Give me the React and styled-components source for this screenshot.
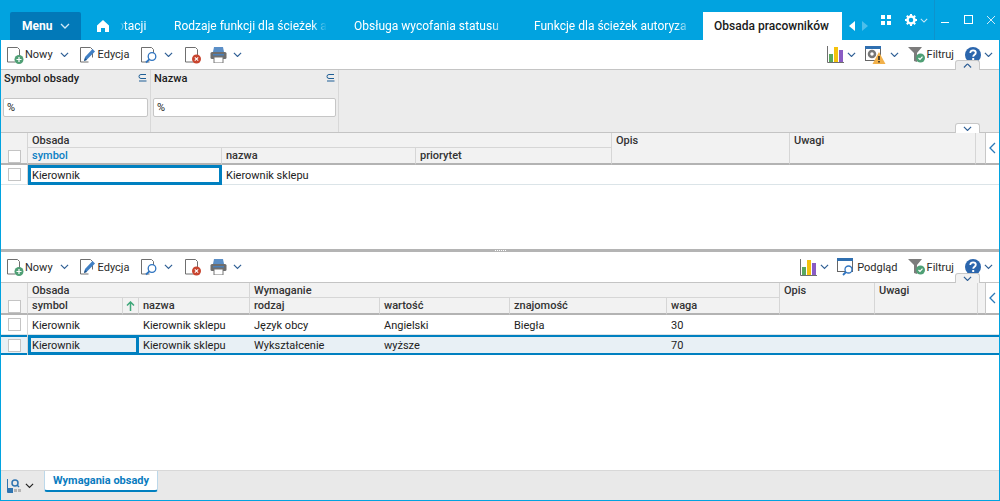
import styled, { createGlobalStyle } from 'styled-components';

const GlobalStyle = createGlobalStyle`
  html, body { margin: 0; padding: 0; height: 100%; overflow: hidden; }
  body { font-family: Roboto, "Liberation Sans", sans-serif; font-size: 11px; color: #222; }
  #root { height: 100%; }
`;

const Chevron = ({ color = '#2f5f95', size = 9 }) => (
  <svg width={size} height={size * 0.6} viewBox="0 0 10 6" fill="none">
    <path d="M1 1l4 4 4-4" stroke={color} strokeWidth="1.3" />
  </svg>
);

const Sheet = ({ children }) => (
  <svg width="17" height="18" viewBox="0 0 17 18" fill="none">
    <path d="M.5 1.500h10l2 2v8M.5 1.500v14.500h8" stroke="#6f6f6f" strokeWidth="1" />
    {children}
  </svg>
);

const NewIcon = () => (
  <Sheet>
    <circle cx="12" cy="13.500" r="4.500" fill="#4f9f75" />
    <path d="M12 11v5M9.500 13.500h5" stroke="#fff" strokeWidth="1.200" />
  </Sheet>
);

const EditIcon = () => (
  <Sheet>
    <path d="M4 15l1-4 7.500-8 2.500 2.500-8 8z" fill="#3f7fc4" />
    <path d="M4 15l1-3 2 2z" fill="#1f4f80" />
  </Sheet>
);

const SearchIcon = () => (
  <Sheet>
    <circle cx="11" cy="10.500" r="3.800" stroke="#2f74c0" strokeWidth="1.300" fill="#fff" />
    <path d="M8.300 13.300L5 16.500" stroke="#2f74c0" strokeWidth="1.800" />
  </Sheet>
);

const DeleteIcon = () => (
  <Sheet>
    <circle cx="11.500" cy="13" r="4.500" fill="#c8452f" />
    <path d="M9.800 11.300l3.400 3.400M13.200 11.300l-3.400 3.400" stroke="#fff" strokeWidth="1.100" />
  </Sheet>
);

const PrinterIcon = () => (
  <svg width="17" height="16" viewBox="0 0 17 16">
    <path d="M4 0h9l1 5H3z" fill="#5b8fc7" />
    <rect x="0.500" y="5" width="16" height="7" rx="1.500" fill="#6d6d6d" />
    <rect x="3" y="7" width="11" height="1.500" fill="#4a7fb8" />
    <rect x="4" y="10" width="9" height="6" fill="#fff" stroke="#777" strokeWidth="1" />
  </svg>
);

const ChartIcon = () => (
  <svg width="17" height="17" viewBox="0 0 17 17">
    <path d="M.5 0v16.500H17" fill="none" stroke="#6f6f6f" />
    <rect x="2" y="8" width="4" height="8" fill="#5aa85f" />
    <rect x="7" y="1" width="4" height="15" fill="#f4c20d" />
    <rect x="12" y="4" width="4" height="12" fill="#8a5cc4" />
  </svg>
);

const SettingsWarnIcon = () => (
  <svg width="21" height="18" viewBox="0 0 21 18">
    <rect x="0.500" y="0.500" width="15" height="14" fill="#fff" stroke="#666" />
    <rect x="0" y="0" width="16" height="3" fill="#2f6fb0" />
    <circle cx="7" cy="8" r="3" fill="none" stroke="#777" strokeWidth="2.500" />
    <path d="M14 6l6.500 12H7.500z" fill="#f2b14a" />
    <path d="M14 10v4M14 15v1.500" stroke="#222" strokeWidth="1.500" />
  </svg>
);

const PreviewIcon = () => (
  <svg width="19" height="18" viewBox="0 0 19 18" fill="none">
    <rect x="0.500" y="0.500" width="15" height="13" fill="#fff" stroke="#666" />
    <rect x="0" y="0" width="16" height="3" fill="#2f6fb0" />
    <circle cx="11.500" cy="11.500" r="3.500" stroke="#2f74c0" strokeWidth="1.300" fill="#fff" />
    <path d="M9 14l-3 3" stroke="#2f74c0" strokeWidth="1.800" />
  </svg>
);

const FunnelIcon = () => (
  <svg width="18" height="16" viewBox="0 0 18 16">
    <path d="M0 0h14L9 6v9l-3-1V6z" fill="#7c7c7c" />
    <circle cx="12.500" cy="11" r="4.500" fill="#4f9f75" />
    <path d="M10.500 11l1.500 1.500 2.500-2.800" fill="none" stroke="#fff" strokeWidth="1.200" />
  </svg>
);

const HelpIcon = () => (
  <svg width="16" height="16" viewBox="0 0 16 16">
    <circle cx="8" cy="8" r="8" fill="#2b66ad" />
    <path d="M5.300 6c0-1.700 1.200-2.700 2.800-2.700s2.700 1 2.700 2.400c0 2-2.600 2-2.600 4" fill="none" stroke="#fff" strokeWidth="1.800" />
    <rect x="7.200" y="11" width="2" height="2" fill="#fff" />
  </svg>
);

const HomeIcon = () => (
  <svg width="12" height="12" viewBox="0 0 12 12">
    <path d="M6 0l6 5.500V12H8V8H4v4H0V5.500z" fill="#fff" />
  </svg>
);

const GridIcon = () => (
  <svg width="11" height="10" viewBox="0 0 11 10">
    <path d="M0 0h4v4H0zM6 0h4v4H6zM0 6h4v4H0zM6 6h4v4H6z" fill="#fff" />
  </svg>
);

const GearIcon = () => (
  <svg width="12" height="12" viewBox="0 0 12 12">
    <circle cx="6" cy="6" r="3.500" fill="none" stroke="#fff" strokeWidth="2.500" />
    <path d="M6 0v2M6 10v2M0 6h2M10 6h2M1.800 1.800l1.400 1.400M8.800 8.800l1.400 1.400M1.800 10.200l1.400-1.400M8.800 3.200l1.400-1.400" stroke="#fff" strokeWidth="2" />
  </svg>
);

const Subset = () => (
  <svg width="9" height="8" viewBox="0 0 9 8" fill="none">
    <path d="M8 .5H3a2 2 0 000 4h5M1 7h7.500" stroke="#1f5f96" strokeWidth="1" />
  </svg>
);

const Back = () => (
  <svg width="7" height="12" viewBox="0 0 7 12" fill="none">
    <path d="M6 1L1 6l5 5" stroke="#2a78b8" strokeWidth="1.300" />
  </svg>
);

const Window = styled.div`
  height: 501px;
  box-sizing: border-box;
  display: flex;
  flex-direction: column;
  background: #01a3e0;
  padding: 0 1px 1px;
`;

const TitleBar = styled.div`
  height: 40px;
  flex: none;
  display: flex;
  align-items: flex-end;
  padding-left: 9px;
  color: #fff;
`;

const MenuButton = styled.div`
  width: 71px;
  height: 28px;
  box-sizing: border-box;
  padding-left: 12px;
  background: #0279b8;
  display: flex;
  align-items: center;
  gap: 8px;
  font-size: 12px;
  font-weight: 700;
  border-radius: 2px 2px 0 0;
`;

const HomeTab = styled.div`
  height: 28px;
  width: 36px;
  display: flex;
  align-items: center;
  padding-left: 16px;
  box-sizing: border-box;
`;

const ClippedTab = styled.div`
  width: ${(p) => p.$width}px;
  margin-right: ${(p) => p.$gap}px;
  height: 28px;
  line-height: 28px;
  font-size: 12px;
  white-space: nowrap;
  overflow: hidden;
  mask-image: ${(p) =>
    p.$fadeStart
      ? 'linear-gradient(to right, transparent 3px, #000 9px)'
      : 'linear-gradient(to right, #000 90%, transparent)'};
`;

const ActiveTab = styled.div`
  width: 139px;
  height: 28px;
  box-sizing: border-box;
  padding-right: 2px;
  line-height: 28px;
  background: #fff;
  color: #1a1a1a;
  font-size: 12px;
  font-weight: 500;
  text-align: center;
`;

const TabNav = styled.div`
  display: flex;
  align-items: center;
  gap: 7px;
  height: 28px;
  margin-left: 7px;
  width: 30px;
`;

const NavArrow = styled.span`
  width: 0;
  height: 0;
  border-top: 5px solid transparent;
  border-bottom: 5px solid transparent;
  border-${(p) => (p.$right ? 'left' : 'right')}: 6px solid ${(p) => (p.$dim ? '#4dbfeb' : '#fff')};
`;

const TitleActions = styled.div`
  align-self: stretch;
  flex: 1;
  position: relative;
`;

const AppIcon = styled.span`
  position: absolute;
  left: ${(p) => p.$x}px;
  top: ${(p) => p.$y}px;
  display: flex;
`;

const WinSeparator = styled.span`
  position: absolute;
  left: 55px;
  top: 0;
  width: 1px;
  height: 40px;
  background: #0e93cc;
`;

const Pane = styled.div`
  background: #fff;
  display: flex;
  flex-direction: column;
  height: ${(p) => p.$height}px;
  flex: ${(p) => (p.$grow ? 1 : 'none')};
  position: relative;
  min-height: 0;
`;

const Toolbar = styled.div`
  height: ${(p) => p.$height}px;
  flex: none;
  box-sizing: border-box;
  display: flex;
  align-items: center;
  justify-content: space-between;
  padding: 0 6px;
  background: #fff;
  border-bottom: 1px solid #c4c4c4;
  font-size: 11px;
`;

const ToolGroup = styled.div`
  display: flex;
  align-items: center;
`;

const ToolItem = styled.span`
  display: flex;
  align-items: center;
  gap: 1px;
  margin-left: ${(p) => p.$ml || 0}px;
  color: #2a2a2a;
`;

const ChevronSlot = styled.span`
  display: flex;
  margin-left: ${(p) => p.$ml || 0}px;
`;

const FilterArea = styled.div`
  height: 62px;
  flex: none;
  display: flex;
  background: #ececec;
  border-bottom: 1px solid #c4c4c4;
`;

const FilterColumn = styled.div`
  width: ${(p) => p.$width}px;
  box-sizing: border-box;
  padding: 1px 2px 0;
  border-right: 1px solid #d8d8d8;
  display: flex;
  flex-direction: column;
`;

const FilterHead = styled.div`
  display: flex;
  justify-content: space-between;
  align-items: center;
  font-weight: 500;
  font-size: 11px;
  color: #1c1c1c;
  height: 14px;
  padding: 0 1px;
`;

const FilterInput = styled.div`
  margin-top: 13px;
  height: 19px;
  box-sizing: border-box;
  background: #fff;
  border: 1px solid #c6c6c6;
  border-radius: 2px;
  padding-left: 3px;
  line-height: 17px;
  font-size: 11px;
`;

const Collapse = styled.div`
  position: absolute;
  left: ${(p) => p.$x}px;
  top: ${(p) => p.$y}px;
  width: 25px;
  height: 10px;
  box-sizing: border-box;
  background: ${(p) => p.$bg};
  border: 1px solid #c8c8c8;
  border-bottom: none;
  border-radius: 3px 3px 0 0;
  display: flex;
  align-items: center;
  justify-content: center;
  z-index: 2;
  svg { transform: ${(p) => (p.$up ? 'rotate(180deg)' : 'none')}; }
`;

const Table = styled.div`
  display: grid;
  grid-template-columns: ${(p) => p.$cols};
  grid-template-rows: 15px 17px;
  grid-auto-rows: 20px;
  flex: none;
`;

const HeadCell = styled.div`
  grid-column: ${(p) => p.$column};
  grid-row: ${(p) => p.$row};
  box-sizing: border-box;
  background: #f2f2f2;
  border-right: 1px solid #d6d6d6;
  border-bottom: ${(p) => (p.$bottom ? '2px solid #b3b3b3' : '1px solid #d6d6d6')};
  padding: ${(p) => (p.$center ? '0' : '1px 0 0 4px')};
  font-size: 11px;
  font-weight: 500;
  line-height: 14px;
  color: ${(p) => (p.$active ? '#0a80c4' : '#333')};
  white-space: nowrap;
  overflow: hidden;
  display: flex;
  align-items: ${(p) => (p.$center ? 'center' : 'flex-start')};
  justify-content: ${(p) => (p.$center ? 'center' : 'flex-start')};
`;

const ArrowCell = styled(HeadCell)`
  background: #fff;
  border-right: none;
  border-left: 1px solid #c8c8c8;
  margin-left: -1px;
`;

const CheckBox = styled.span`
  width: 11px;
  height: 11px;
  border: 1px solid #c4c4c4;
  background: #fff;
  display: block;
  margin-top: ${(p) => p.$mt || 0}px;
`;

const selectedRow = `
  background: #e8f0f5;
  border-bottom: none;
  box-shadow: inset 0 2px 0 #0080c0, inset 0 -2px 0 #0080c0;
`;

const CheckCell = styled.div`
  grid-column: 1;
  box-sizing: border-box;
  border-right: 1px solid #d6d6d6;
  border-bottom: 1px solid #dbe4e8;
  display: flex;
  align-items: center;
  justify-content: center;
  background: #fff;
  ${(p) => p.$selected && selectedRow}
`;

const Cell = styled.div`
  box-sizing: border-box;
  grid-column: ${(p) => p.$column};
  line-height: 22px;
  height: 20px;
  padding-left: 4px;
  font-size: 11px;
  color: #222;
  white-space: nowrap;
  border-bottom: 1px solid #dbe4e8;
  background: #fff;
  ${(p) => p.$selected && selectedRow}
  ${(p) => p.$focus && `
    outline: 3px solid #0080c0;
    outline-offset: -3px;
    border-bottom: none;
  `}
`;

const Splitter = styled.div`
  height: 3px;
  flex: none;
  background: #b4b4b4;
  display: flex;
  align-items: center;
  justify-content: center;
`;

const Grip = styled.span`
  width: 11px;
  height: 1px;
  border-top: 1px dotted #fff;
`;

const BottomBar = styled.div`
  height: 30px;
  flex: none;
  box-sizing: border-box;
  border-top: 1px solid #d8d8d8;
  background: #e9e9e9;
  display: flex;
  align-items: flex-start;
  padding-left: 6px;
`;

const ViewSwitch = styled.span`
  display: flex;
  align-items: center;
  gap: 3px;
  margin-top: 8px;
  width: 37px;
`;

const SheetTab = styled.div`
  width: 114px;
  height: 21px;
  box-sizing: border-box;
  background: #fff;
  border: 1px solid #bcd8ea;
  border-top: none;
  border-bottom: 2px solid #0080c0;
  border-radius: 0 0 3px 3px;
  color: #0a7cc0;
  font-size: 11px;
  font-weight: 700;
  line-height: 20px;
  text-align: center;
`;

const TOP_COLS = '27px 194px 194px 196px 178px 186px 10px 1fr';
const BOTTOM_COLS = '27px 95px 16px 111px 130px 130px 157px 113px 95px 103px 8px 1fr';

const PrimaryTools = () => (
  <ToolGroup>
    <ToolItem><NewIcon />Nowy</ToolItem>
    <ChevronSlot $ml={7}><Chevron /></ChevronSlot>
    <ToolItem $ml={11}><EditIcon />Edycja</ToolItem>
    <ToolItem $ml={12}><SearchIcon /></ToolItem>
    <ChevronSlot $ml={6}><Chevron /></ChevronSlot>
    <ToolItem $ml={12}><DeleteIcon /></ToolItem>
    <ToolItem $ml={8}><PrinterIcon /></ToolItem>
    <ChevronSlot $ml={6}><Chevron /></ChevronSlot>
  </ToolGroup>
);

const FilterTools = ({ ml }) => (
  <>
    <ToolItem $ml={ml}><FunnelIcon />Filtruj</ToolItem>
    <ToolItem $ml={11}><HelpIcon /></ToolItem>
    <ChevronSlot $ml={3}><Chevron /></ChevronSlot>
  </>
);

const App = () => (
  <>
    <GlobalStyle />
    <Window>
      <TitleBar>
        <MenuButton>Menu <Chevron color="#cfe9f7" size={10} /></MenuButton>
        <HomeTab><HomeIcon /></HomeTab>
        <ClippedTab $width={31} $gap={26} $fadeStart>otacji</ClippedTab>
        <ClippedTab $width={153} $gap={27}>Rodzaje funkcji dla ścieżek a</ClippedTab>
        <ClippedTab $width={153} $gap={27}>Obsługa wycofania statusu</ClippedTab>
        <ClippedTab $width={158} $gap={11}>Funkcje dla ścieżek autoryza</ClippedTab>
        <ActiveTab>Obsada pracowników</ActiveTab>
        <TabNav><NavArrow /><NavArrow $right $dim /></TabNav>
        <TitleActions>
          <AppIcon $x={2} $y={15}><GridIcon /></AppIcon>
          <AppIcon $x={26} $y={14}><GearIcon /></AppIcon>
          <AppIcon $x={41} $y={18}><Chevron color="#cfe9f7" size={8} /></AppIcon>
          <WinSeparator />
          <AppIcon $x={56} $y={0}>
            <svg width="66" height="40" viewBox="0 0 66 40" fill="none">
              <path d="M6 22.500h8" stroke="#fff" />
              <rect x="29.500" y="15.500" width="8" height="8" stroke="#fff" />
              <path d="M52 16l8 8M60 16l-8 8" stroke="#cfe9f7" />
            </svg>
          </AppIcon>
        </TitleActions>
      </TitleBar>

      <Pane $height={209}>
        <Toolbar $height={30}>
          <PrimaryTools />
          <ToolGroup>
            <ToolItem><ChartIcon /></ToolItem>
            <ChevronSlot $ml={3}><Chevron /></ChevronSlot>
            <ToolItem $ml={9}><SettingsWarnIcon /></ToolItem>
            <ChevronSlot $ml={4}><Chevron /></ChevronSlot>
            <FilterTools ml={9} />
          </ToolGroup>
        </Toolbar>
        <Collapse $x={954} $y={20} $bg="#ececec" $up><Chevron /></Collapse>
        <Collapse $x={954} $y={83} $bg="#fff"><Chevron /></Collapse>
        <FilterArea>
          <FilterColumn $width={150}>
            <FilterHead><span>Symbol obsady</span><Subset /></FilterHead>
            <FilterInput>%</FilterInput>
          </FilterColumn>
          <FilterColumn $width={188}>
            <FilterHead><span>Nazwa</span><Subset /></FilterHead>
            <FilterInput>%</FilterInput>
          </FilterColumn>
        </FilterArea>
        <Table $cols={TOP_COLS}>
          <HeadCell $column="1" $row="1 / 3" $bottom $center><CheckBox $mt={16} /></HeadCell>
          <HeadCell $column="2 / 5" $row="1">Obsada</HeadCell>
          <HeadCell $column="2" $row="2" $bottom $active>symbol</HeadCell>
          <HeadCell $column="3" $row="2" $bottom>nazwa</HeadCell>
          <HeadCell $column="4" $row="2" $bottom>priorytet</HeadCell>
          <HeadCell $column="5" $row="1 / 3" $bottom>Opis</HeadCell>
          <HeadCell $column="6" $row="1 / 3" $bottom>Uwagi</HeadCell>
          <HeadCell $column="7" $row="1 / 3" $bottom />
          <ArrowCell $column="8" $row="1 / 3" $bottom $center><Back /></ArrowCell>
          <CheckCell><CheckBox /></CheckCell>
          <Cell $column="2" $focus>Kierownik</Cell>
          <Cell $column="3">Kierownik sklepu</Cell>
          <Cell $column="4 / -1" />
        </Table>
      </Pane>

      <Splitter><Grip /></Splitter>

      <Pane $grow>
        <Toolbar $height={31}>
          <PrimaryTools />
          <ToolGroup>
            <ToolItem><ChartIcon /></ToolItem>
            <ChevronSlot $ml={3}><Chevron /></ChevronSlot>
            <ToolItem $ml={8}><PreviewIcon />Podgląd</ToolItem>
            <FilterTools ml={10} />
          </ToolGroup>
        </Toolbar>
        <Collapse $x={954} $y={21} $bg="#f2f2f2"><Chevron /></Collapse>
        <Table $cols={BOTTOM_COLS}>
          <HeadCell $column="1" $row="1 / 3" $bottom $center><CheckBox $mt={16} /></HeadCell>
          <HeadCell $column="2 / 5" $row="1">Obsada</HeadCell>
          <HeadCell $column="5 / 9" $row="1">Wymaganie</HeadCell>
          <HeadCell $column="2" $row="2" $bottom>symbol</HeadCell>
          <HeadCell $column="3" $row="2" $bottom $center>
            <svg width="9" height="10" viewBox="0 0 9 10" fill="none">
              <path d="M4.500 10V1M1 4.500l3.500-3.500L8 4.500" stroke="#3fa77a" strokeWidth="1.500" />
            </svg>
          </HeadCell>
          <HeadCell $column="4" $row="2" $bottom>nazwa</HeadCell>
          <HeadCell $column="5" $row="2" $bottom>rodzaj</HeadCell>
          <HeadCell $column="6" $row="2" $bottom>wartość</HeadCell>
          <HeadCell $column="7" $row="2" $bottom>znajomość</HeadCell>
          <HeadCell $column="8" $row="2" $bottom>waga</HeadCell>
          <HeadCell $column="9" $row="1 / 3" $bottom>Opis</HeadCell>
          <HeadCell $column="10" $row="1 / 3" $bottom>Uwagi</HeadCell>
          <HeadCell $column="11" $row="1 / 3" $bottom />
          <ArrowCell $column="12" $row="1 / 3" $bottom $center><Back /></ArrowCell>

          <CheckCell><CheckBox /></CheckCell>
          <Cell $column="2 / 4">Kierownik</Cell>
          <Cell $column="4">Kierownik sklepu</Cell>
          <Cell $column="5">Język obcy</Cell>
          <Cell $column="6">Angielski</Cell>
          <Cell $column="7">Biegła</Cell>
          <Cell $column="8">30</Cell>
          <Cell $column="9 / -1" />

          <CheckCell $selected><CheckBox /></CheckCell>
          <Cell $column="2 / 4" $selected $focus>Kierownik</Cell>
          <Cell $column="4" $selected>Kierownik sklepu</Cell>
          <Cell $column="5" $selected>Wykształcenie</Cell>
          <Cell $column="6" $selected>wyższe</Cell>
          <Cell $column="7" $selected />
          <Cell $column="8" $selected>70</Cell>
          <Cell $column="9 / -1" $selected />
        </Table>
      </Pane>

      <BottomBar>
        <ViewSwitch>
          <svg width="15" height="14" viewBox="0 0 15 14" fill="none">
            <path d="M.5 0v13.500H6" stroke="#2f74b0" />
            <rect x="1" y="9" width="5" height="4" fill="#2f74b0" />
            <rect x="7" y="10" width="3" height="3" fill="#b5b5b5" />
            <rect x="11" y="10" width="3" height="3" fill="#b5b5b5" />
            <circle cx="8" cy="4" r="3" stroke="#2f74b0" strokeWidth="1.500" />
            <path d="M10 6l2 2" stroke="#2f74b0" strokeWidth="1.500" />
          </svg>
          <Chevron color="#222" />
        </ViewSwitch>
        <SheetTab>Wymagania obsady</SheetTab>
      </BottomBar>
    </Window>
  </>
);

export default App;
